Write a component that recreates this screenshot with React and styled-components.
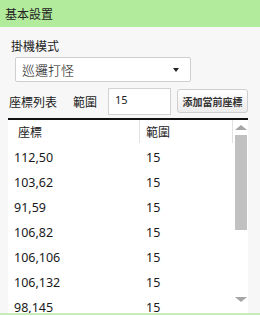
import { Fragment } from "react";
import styled, { createGlobalStyle } from "styled-components";

const Global = createGlobalStyle`
  html, body { margin: 0; padding: 0; background: #ffffff; }
  body { font-family: "Noto Sans", "Noto Sans CJK TC", sans-serif; color: #222; }
`;

const rows = [
  ["112,50", "15"],
  ["103,62", "15"],
  ["91,59", "15"],
  ["106,82", "15"],
  ["106,106", "15"],
  ["106,132", "15"],
  ["98,145", "15"],
];

const Panel = styled.div`
  width: 260px;
  height: 313px;
  background: #f7f7f7;
  border-bottom: 2px solid #c9ecbd;
  overflow: hidden;
  display: flex;
  flex-direction: column;
  font-family: "Noto Sans CJK TC", sans-serif;
`;

const Header = styled.div`
  height: 27px;
  flex: none;
  background: #b2eb9c;
  padding-left: 5px;
  font-size: 12px;
  line-height: 28px;
  color: #222;
`;

const Label = styled.div`
  margin: 11px 0 0 11px;
  font-size: 12px;
  line-height: 16px;
  color: #222;
`;

const Select = styled.div`
  margin: 3px 0 0 15px;
  width: 176px;
  height: 25px;
  box-sizing: border-box;
  background: #fff;
  border: 1px solid #cfcfcf;
  border-radius: 2px;
  display: flex;
  align-items: center;
  justify-content: space-between;
  padding: 0 11px 0 6px;
  font-size: 13px;
  font-weight: 300;
  color: #111;
`;

const Caret = styled.span`
  width: 0;
  height: 0;
  border-left: 3px solid transparent;
  border-right: 3px solid transparent;
  border-top: 4px solid #222;
`;

const Toolbar = styled.div`
  margin: 5px 0 0 9px;
  height: 28px;
  display: flex;
  align-items: center;
  font-size: 12px;
  color: #222;
`;

const Gap = styled.span`
  margin-left: ${(p) => p.$left}px;
`;

const Input = styled.div`
  margin-left: 11px;
  width: 63px;
  height: 27px;
  box-sizing: border-box;
  background: #fff;
  border: 1px solid #d2d2d2;
  padding-left: 6px;
  font-family: "Noto Sans", sans-serif;
  font-size: 11px;
  line-height: 22px;
  color: #222;
`;

const Button = styled.div`
  margin-left: 6px;
  width: 71px;
  height: 24px;
  box-sizing: border-box;
  border: 1px solid #cfcfcf;
  border-radius: 3px;
  background: linear-gradient(#ffffff, #ececec);
  font-size: 10px;
  font-weight: bold;
  color: #333;
  display: flex;
  align-items: center;
  justify-content: center;
`;

const Table = styled.div`
  margin: 3px 0 0 8px;
  width: 240px;
  flex: 1;
  background: #fff;
  border-top: 2px solid #111;
  display: flex;
  min-height: 0;
`;

const Grid = styled.div`
  flex: 1;
  display: grid;
  grid-template-columns: 132px 93px;
  grid-auto-rows: 25px;
  align-content: start;
  overflow: hidden;
`;

const HeadCell = styled.div`
  height: 23px;
  border-right: 1px solid #e2e2e2;
  padding-left: ${(p) => p.$pad}px;
  font-size: 12px;
  line-height: 24px;
  color: #222;
  margin-bottom: 2px;
`;

const Cell = styled.div`
  padding-left: 6px;
  font-family: "Noto Sans", sans-serif;
  font-size: 12.5px;
  line-height: 25px;
  color: #1a1a1a;
`;

const Scrollbar = styled.div`
  width: 15px;
  flex: none;
  display: flex;
  flex-direction: column;
  align-items: center;
  background: #fff;
`;

const Arrow = styled.span`
  width: 0;
  height: 0;
  border-left: 6px solid transparent;
  border-right: 6px solid transparent;
  ${(p) =>
    p.$up
      ? "border-bottom: 5px solid #a6a6a6; margin-top: 5px;"
      : "border-top: 5px solid #a6a6a6; margin-top: auto; margin-bottom: 11px;"}
`;

const Thumb = styled.div`
  margin-top: 5px;
  width: 12px;
  height: 95px;
  background: #c1c1c1;
`;

export default function App() {
  return (
    <>
      <Global />
      <Panel>
        <Header>基本設置</Header>
        <Label>掛機模式</Label>
        <Select>
          巡邏打怪
          <Caret />
        </Select>
        <Toolbar>
          座標列表
          <Gap $left={16}>範圍</Gap>
          <Input>15</Input>
          <Button>添加當前座標</Button>
        </Toolbar>
        <Table>
          <Grid>
            <HeadCell $pad={10}>座標</HeadCell>
            <HeadCell $pad={6}>範圍</HeadCell>
            {rows.map(([pos, range]) => (
              <Fragment key={pos}>
                <Cell>{pos}</Cell>
                <Cell>{range}</Cell>
              </Fragment>
            ))}
          </Grid>
          <Scrollbar>
            <Arrow $up />
            <Thumb />
            <Arrow />
          </Scrollbar>
        </Table>
      </Panel>
    </>
  );
}
